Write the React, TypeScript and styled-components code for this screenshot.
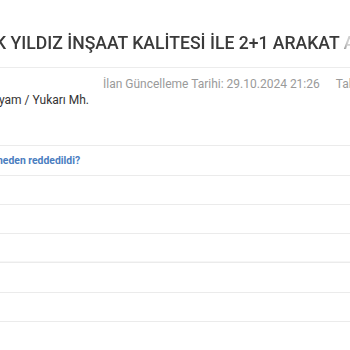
import React from 'react'
import styled, { createGlobalStyle } from 'styled-components'

const Global = createGlobalStyle`
  html, body {
    margin: 0;
    padding: 0;
    background: #fff;
    overflow: hidden;
  }
  body {
    font-family: Roboto, "Liberation Sans", Arial, sans-serif;
    color: #333;
  }
`

const Page = styled.div`
  width: 350px;
  height: 350px;
  overflow: hidden;
`

const TitleBar = styled.div`
  padding: 31px 0 12px;
  border-bottom: 1px solid #ececec;
  white-space: nowrap;
  overflow: hidden;
`

const Title = styled.h1`
  margin: 0 0 0 -5px;
  font-size: 17.6px;
  line-height: 24px;
  font-weight: 500;
  color: #3a3a3a;
  -webkit-mask-image: linear-gradient(to right, #000 345px, rgba(0, 0, 0, 0.25) 352px);
  mask-image: linear-gradient(to right, #000 345px, rgba(0, 0, 0, 0.25) 352px);
`

const Meta = styled.div`
  display: flex;
  gap: 16px;
  margin: 8px 0 0 103px;
  white-space: nowrap;
  font-size: 12px;
  line-height: 16px;
  color: #9a9a9a;
`

const Location = styled.div`
  font-size: 12px;
  line-height: 16px;
  color: #333;
  margin-left: -1px;
  white-space: nowrap;
`

const List = styled.div`
  margin-top: 37px;
  border-top: 1px solid #ebebeb;
`

const Row = styled.div<{ $tall?: boolean; $shade?: boolean }>`
  box-sizing: border-box;
  height: ${p => (p.$tall ? 30 : 29)}px;
  border-bottom: 1px solid #ebebeb;
  display: flex;
  align-items: center;
  box-shadow: ${p => (p.$shade ? 'inset 0 -6px 0 -5px #f6f6f6' : 'none')};
`

const Link = styled.a`
  font-size: 10.4px;
  font-weight: 700;
  color: #4a7dbf;
  text-decoration: none;
  margin-left: -3px;
  white-space: nowrap;
`

export default function App() {
  return (
    <Page>
      <Global />
      <TitleBar>
        <Title>K YILDIZ İNŞAAT KALİTESİ İLE 2+1 ARAKAT AYRI</Title>
      </TitleBar>
      <Meta>
        <span>İlan Güncelleme Tarihi: 29.10.2024 21:26</span>
        <span>Tahmini</span>
      </Meta>
      <Location>yam / Yukarı Mh.</Location>
      <List>
        <Row $tall>
          <Link href="#">neden reddedildi?</Link>
        </Row>
        <Row />
        <Row />
        <Row $shade />
        <Row $tall />
        <Row />
      </List>
    </Page>
  )
}
